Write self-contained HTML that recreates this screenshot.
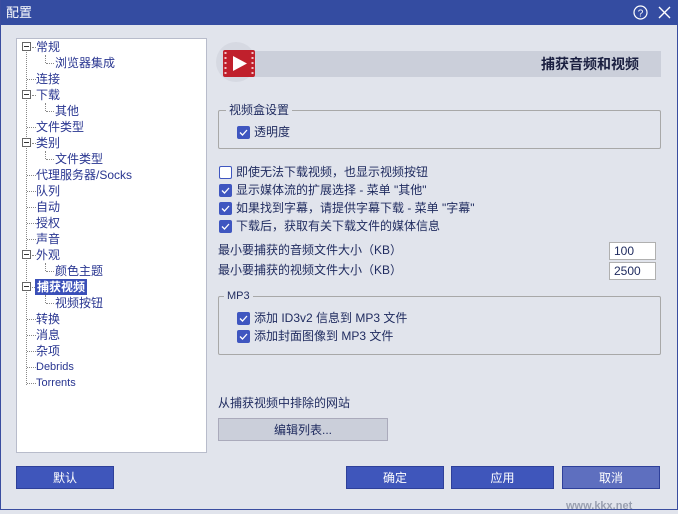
<!DOCTYPE html>
<html><head><meta charset="utf-8"><style>
*{margin:0;padding:0;box-sizing:border-box}
body{width:678px;height:510px;background:#e1e4ec;font-family:"Liberation Sans","Noto Sans CJK SC",sans-serif;font-size:12px;color:#1e2a5e;position:relative;overflow:hidden;border:1px solid #3a4da0;border-top:none}
.abs{position:absolute}
.title{left:0;top:0;width:678px;height:25px;background:#344ca1;color:#fff;font-size:13px;line-height:25px;padding-left:5px}
.tree{left:15px;top:38px;width:191px;height:415px;background:#fff;border:1px solid #b8bccb}
.it{position:absolute;height:16px;line-height:16px;color:#283590;font-size:12px;white-space:nowrap}
.dv{position:absolute;border-left:1px dotted #888;width:0}
.dh{position:absolute;border-top:1px dotted #888;height:0}
.box{position:absolute;width:9px;height:9px;border:1px solid #666;background:#fff}
.box:after{content:"";position:absolute;left:1px;top:3px;width:5px;height:1px;background:#333}
.cb{position:absolute;width:13px;height:13px;background:#3f56c0;border-radius:2px}
.cb svg{position:absolute;left:1px;top:1px}
.ucb{position:absolute;width:13px;height:13px;border:1px solid #3f56c0;background:#fff;border-radius:2px}
.lbl{position:absolute;white-space:nowrap;line-height:16px;font-size:12px}
.grp{position:absolute;border:1px solid #a8a8a8;border-radius:2px}
.gt{position:absolute;background:#e1e4ec;padding:0 3px;line-height:14px}
.inp{position:absolute;background:#fff;border:1px solid #b0b0b0;height:18px;line-height:16px;padding-left:4px;font-size:12px}
.btn{position:absolute;height:23px;background:#3f56bb;color:#fff;text-align:center;line-height:23px;font-size:12px;border:1px solid #2e409a}
</style></head><body>
<div class="abs title">配置
<svg class="abs" style="left:632px;top:5px" width="15" height="15" viewBox="0 0 15 15"><circle cx="7.5" cy="7.5" r="6.5" fill="none" stroke="#fff" stroke-width="1.2"/><text x="7.5" y="11.5" fill="#fff" font-size="10" text-anchor="middle" font-family="Liberation Sans">?</text></svg>
<svg class="abs" style="left:657px;top:6px" width="13" height="13" viewBox="0 0 13 13"><path d="M1 1L12 12M12 1L1 12" stroke="#fff" stroke-width="1.4"/></svg>
</div>
<div class="abs tree">
<div class="dv" style="left:9px;top:8px;height:338px"></div>
<div class="dv" style="left:28px;top:16px;height:8px"></div>
<div class="dv" style="left:28px;top:64px;height:8px"></div>
<div class="dv" style="left:28px;top:112px;height:8px"></div>
<div class="dv" style="left:28px;top:224px;height:8px"></div>
<div class="dv" style="left:28px;top:256px;height:8px"></div>
<div class="dh" style="left:15px;top:8px;width:4px"></div>
<div class="dh" style="left:10px;top:40px;width:9px"></div>
<div class="dh" style="left:15px;top:56px;width:4px"></div>
<div class="dh" style="left:10px;top:88px;width:9px"></div>
<div class="dh" style="left:15px;top:104px;width:4px"></div>
<div class="dh" style="left:10px;top:136px;width:9px"></div>
<div class="dh" style="left:10px;top:152px;width:9px"></div>
<div class="dh" style="left:10px;top:168px;width:9px"></div>
<div class="dh" style="left:10px;top:184px;width:9px"></div>
<div class="dh" style="left:10px;top:200px;width:9px"></div>
<div class="dh" style="left:15px;top:216px;width:4px"></div>
<div class="dh" style="left:15px;top:248px;width:3px"></div>
<div class="dh" style="left:10px;top:280px;width:9px"></div>
<div class="dh" style="left:10px;top:296px;width:9px"></div>
<div class="dh" style="left:10px;top:312px;width:9px"></div>
<div class="dh" style="left:10px;top:328px;width:9px"></div>
<div class="dh" style="left:10px;top:344px;width:9px"></div>
<div class="dh" style="left:29px;top:24px;width:8px"></div>
<div class="dh" style="left:29px;top:72px;width:8px"></div>
<div class="dh" style="left:29px;top:120px;width:8px"></div>
<div class="dh" style="left:29px;top:232px;width:8px"></div>
<div class="dh" style="left:29px;top:264px;width:8px"></div>
<div class="box" style="left:5px;top:3px"></div>
<div class="box" style="left:5px;top:51px"></div>
<div class="box" style="left:5px;top:99px"></div>
<div class="box" style="left:5px;top:211px"></div>
<div class="box" style="left:5px;top:243px"></div>
<div class="it" style="left:19px;top:0">常规</div>
<div class="it" style="left:38px;top:16px">浏览器集成</div>
<div class="it" style="left:19px;top:32px">连接</div>
<div class="it" style="left:19px;top:48px">下载</div>
<div class="it" style="left:38px;top:64px">其他</div>
<div class="it" style="left:19px;top:80px">文件类型</div>
<div class="it" style="left:19px;top:96px">类别</div>
<div class="it" style="left:38px;top:112px">文件类型</div>
<div class="it" style="left:19px;top:128px">代理服务器/Socks</div>
<div class="it" style="left:19px;top:144px">队列</div>
<div class="it" style="left:19px;top:160px">自动</div>
<div class="it" style="left:19px;top:176px">授权</div>
<div class="it" style="left:19px;top:192px">声音</div>
<div class="it" style="left:19px;top:208px">外观</div>
<div class="it" style="left:38px;top:224px">颜色主题</div>
<div class="it" style="left:18px;top:240px;background:#3a4fb8;color:#fff;font-weight:bold;padding:0 2px">捕获视频</div>
<div class="it" style="left:38px;top:256px">视频按钮</div>
<div class="it" style="left:19px;top:272px">转换</div>
<div class="it" style="left:19px;top:288px">消息</div>
<div class="it" style="left:19px;top:304px">杂项</div>
<div class="it" style="left:19px;top:320px;font-size:11px">Debrids</div>
<div class="it" style="left:19px;top:336px;font-size:11px">Torrents</div>
</div>
<div class="abs" style="left:235px;top:51px;width:425px;height:26px;background:#cbcfda"></div>
<div class="abs" style="left:215px;top:42px;width:40px;height:40px;border-radius:50%;background:#d6d9e2"></div>
<svg class="abs" style="left:222px;top:50px" width="32" height="27" viewBox="0 0 32 27"><rect width="32" height="27" rx="2" fill="#c0202c"/><g fill="#f3c0c4"><rect x="1.5" y="2" width="2" height="2"/><rect x="1.5" y="7" width="2" height="2"/><rect x="1.5" y="12" width="2" height="2"/><rect x="1.5" y="17" width="2" height="2"/><rect x="1.5" y="22" width="2" height="2"/><rect x="28.5" y="2" width="2" height="2"/><rect x="28.5" y="7" width="2" height="2"/><rect x="28.5" y="12" width="2" height="2"/><rect x="28.5" y="17" width="2" height="2"/><rect x="28.5" y="22" width="2" height="2"/></g><path d="M10 6L24 13.5L10 21Z" fill="#fff"/></svg>
<div class="lbl" style="left:540px;top:56px;font-size:14px;font-weight:bold;color:#1a1f40">捕获音频和视频</div>
<div class="grp" style="left:217px;top:110px;width:443px;height:39px"></div>
<div class="gt" style="left:225px;top:103px">视频盒设置</div>
<div class="cb" style="left:236px;top:126px"><svg width="11" height="11"><path d="M2 5.5L4.5 8L9 3" stroke="#fff" stroke-width="1.3" fill="none"/></svg></div>
<div class="lbl" style="left:253px;top:124px">透明度</div>
<div class="ucb" style="left:218px;top:166px"></div>
<div class="lbl" style="left:235px;top:164px">即使无法下载视频，也显示视频按钮</div>
<div class="cb" style="left:218px;top:184px"><svg width="11" height="11"><path d="M2 5.5L4.5 8L9 3" stroke="#fff" stroke-width="1.3" fill="none"/></svg></div>
<div class="lbl" style="left:235px;top:182px">显示媒体流的扩展选择 - 菜单 "其他"</div>
<div class="cb" style="left:218px;top:202px"><svg width="11" height="11"><path d="M2 5.5L4.5 8L9 3" stroke="#fff" stroke-width="1.3" fill="none"/></svg></div>
<div class="lbl" style="left:235px;top:200px">如果找到字幕，请提供字幕下载 - 菜单 "字幕"</div>
<div class="cb" style="left:218px;top:220px"><svg width="11" height="11"><path d="M2 5.5L4.5 8L9 3" stroke="#fff" stroke-width="1.3" fill="none"/></svg></div>
<div class="lbl" style="left:235px;top:218px">下载后，获取有关下载文件的媒体信息</div>
<div class="lbl" style="left:217px;top:242px">最小要捕获的音频文件大小（KB）</div>
<div class="lbl" style="left:217px;top:262px">最小要捕获的视频文件大小（KB）</div>
<div class="inp" style="left:608px;top:242px;width:47px">100</div>
<div class="inp" style="left:608px;top:262px;width:47px">2500</div>
<div class="grp" style="left:217px;top:296px;width:443px;height:59px"></div>
<div class="gt" style="left:223px;top:289px;font-size:11px">MP3</div>
<div class="cb" style="left:236px;top:312px"><svg width="11" height="11"><path d="M2 5.5L4.5 8L9 3" stroke="#fff" stroke-width="1.3" fill="none"/></svg></div>
<div class="lbl" style="left:253px;top:310px">添加 ID3v2 信息到 MP3 文件</div>
<div class="cb" style="left:236px;top:330px"><svg width="11" height="11"><path d="M2 5.5L4.5 8L9 3" stroke="#fff" stroke-width="1.3" fill="none"/></svg></div>
<div class="lbl" style="left:253px;top:328px">添加封面图像到 MP3 文件</div>
<div class="lbl" style="left:217px;top:395px">从捕获视频中排除的网站</div>
<div class="btn" style="left:217px;top:418px;width:170px;background:#cbcfda;color:#1e2a5e;border-color:#aab"> 编辑列表...</div>
<div class="btn" style="left:15px;top:466px;width:98px">默认</div>
<div class="btn" style="left:345px;top:466px;width:98px">确定</div>
<div class="btn" style="left:450px;top:466px;width:103px">应用</div>
<div class="btn" style="left:561px;top:466px;width:98px;background:#5e6fbf">取消</div>
<div class="lbl" style="left:565px;top:498px;font-size:11px;color:#9aa0b0;font-weight:bold">www.kkx.net</div>
</body></html>
